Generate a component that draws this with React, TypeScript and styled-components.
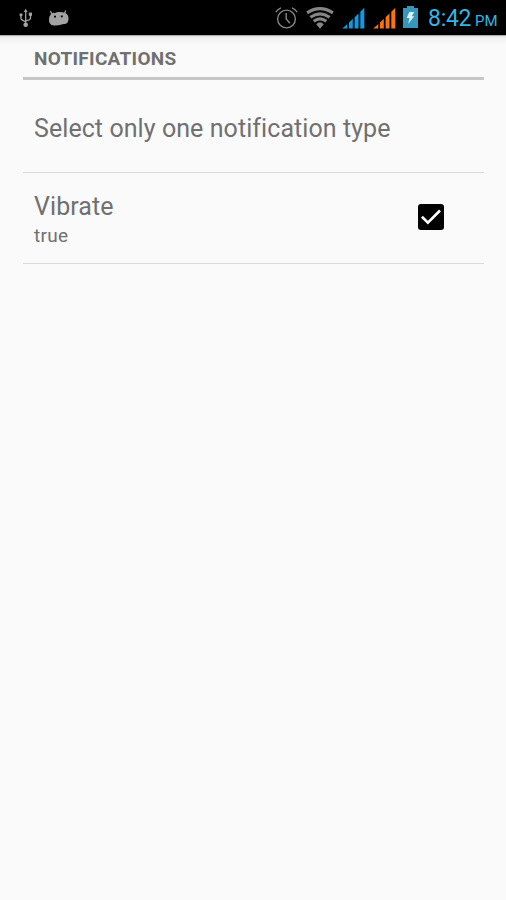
import React from "react";
import styled, { createGlobalStyle } from "styled-components";

const GlobalStyle = createGlobalStyle`
  *, *::before, *::after { box-sizing: border-box; }
  html, body { margin: 0; background: #fafafa; }
  body { font-family: Roboto, "Noto Sans", sans-serif; overflow: hidden; }
`;

const Screen = styled.div`
  display: flex;
  flex-direction: column;
  width: 100%;
  height: 100vh;
  background: #fafafa;
  color: #707070;
`;

const StatusBar = styled.header`
  display: flex;
  justify-content: space-between;
  flex: none;
  height: 35px;
  padding: 0 9px 0 18px;
  background: #000;
`;

const StatusGroup = styled.div<{ $gap: number }>`
  display: flex;
  align-items: center;
  gap: ${(p) => p.$gap}px;
`;

const Icon = styled.svg`
  display: block;
  flex: none;
`;

const BatterySlot = styled.span`
  margin: -1px 1px 0 -1px;
`;

const Clock = styled.time`
  display: flex;
  align-items: baseline;
  gap: 4px;
  margin-left: 1px;
  padding-top: 4px;
  color: #33b5e5;
  font-size: 23px;
  line-height: 33px;
`;

const ClockDigits = styled.span`
  width: 43px;
  white-space: nowrap;
  letter-spacing: -0.3px;
`;

const Meridiem = styled.span`
  width: 22px;
  font-size: 15px;
  white-space: nowrap;
`;

const Content = styled.main`
  flex: 1;
  padding: 0 22.5px;
  background: linear-gradient(#ababab 0 1px, #e6e6e6 1px, #f3f3f3 4px, #fafafa 10px);
`;

const CategoryTitle = styled.h2`
  height: 45px;
  margin: 0;
  padding: 12px 11.5px 0;
  border-bottom: 3px solid #c6c6c6;
  font-size: 19px;
  font-weight: 700;
  line-height: 24px;
  letter-spacing: 0.28px;
`;

const Preference = styled.section<{ $height: number }>`
  display: flex;
  align-items: center;
  justify-content: space-between;
  height: ${(p) => p.$height}px;
  padding: 0 39.5px 0 11.5px;
  border-bottom: 1px solid #d9d9d9;
`;

const Labels = styled.div`
  display: flex;
  flex-direction: column;
`;

const Title = styled.span`
  padding-top: 5px;
  font-size: 25px;
  line-height: 32px;
  letter-spacing: 0.07px;
  white-space: nowrap;
`;

const Summary = styled.span`
  margin-top: -1px;
  font-size: 19px;
  line-height: 28px;
  letter-spacing: 0.3px;
`;

const CheckBox = styled.button`
  display: block;
  width: 26px;
  height: 26px;
  margin-top: -2px;
  padding: 0;
  border: 0;
  border-radius: 3px;
  background: #000;
`;

const UsbIcon = () => (
  <Icon width="16" height="20" viewBox="0 0 16 20" fill="none" stroke="#a3a3a3" strokeWidth="1.3">
    <path d="M7.7 3v13M3 7v3.2q0 1.5 1.5 2L7.7 14M12.5 6v4q0 1.2-1.5 1.8L7.7 13" />
    <path d="M5.7 4 7.7.8 9.7 4Z" fill="#a3a3a3" stroke="none" />
    <circle cx="3" cy="6.8" r="1.6" fill="#a3a3a3" stroke="none" />
    <path d="M10.8 4.6h3.2v3.2h-3.2Z" fill="#a3a3a3" stroke="none" />
    <circle cx="7.7" cy="16.7" r="2.3" fill="#a3a3a3" stroke="none" />
  </Icon>
);

const AndroidIcon = () => (
  <Icon width="21" height="18" viewBox="0 0 21 18">
    <path d="M3.9 5.2 2.4 2M16.4 4.4 17.8 1.4" stroke="#a3a3a3" strokeWidth="1.3" />
    <path d="M3 5Q5 3.4 7 4Q9 2.9 11.5 3Q14.5 2.9 17 4Q20.5 5.4 20.5 9.4Q20.5 14.6 16.8 15Q14.8 14.8 12.8 15.8Q10 16.8 5.5 16.4Q1 15.8 1 11.2Q1 7 3 5Z" fill="#a3a3a3" />
    <path d="M6 7.7h2M12.8 7.3h2" stroke="#000" strokeWidth="1.7" />
  </Icon>
);

const AlarmIcon = () => (
  <Icon width="23" height="24" viewBox="0 0 23 24" fill="none" stroke="#858585" strokeWidth="1.4">
    <circle cx="11.5" cy="13" r="8.9" />
    <path d="M11.2 7v6l3.7 4.3M.8 6.3Q2.4 3.2 6 1.8M17 1.8q3.6 1.4 5.2 4.5" />
  </Icon>
);

const WifiIcon = () => (
  <Icon width="28" height="22" viewBox="0 0 28 22" fill="none" stroke="#858585" strokeWidth="3.2">
    <path d="M1.1 5.8Q14-2.5 26.9 5.8" />
    <path d="M4.4 10.2Q14 3.5 23.6 10.2" />
    <path d="M7.7 14.3Q14 9.6 20.3 14.3" />
    <path d="M10.2 17.3Q14 13.4 17.8 17.3L14 21.7Z" fill="#858585" stroke="none" />
  </Icon>
);

const SignalIcon = ({ color }: { color: string }) => (
  <Icon width="23" height="22" viewBox="0 0 23 22" fill={color}>
    <path d="M.3 21.5 5.3 17v4.5ZM7 15.4l3.8-3.6v9.7H7ZM12.6 10.2l3.9-3.7v15h-3.9ZM18.3 4.7 22.3.8v20.7h-4Z" />
  </Icon>
);

const BatteryIcon = () => (
  <Icon width="15" height="22" viewBox="0 0 15 22">
    <path d="M0 2h4V0h7v2h4v20H0Z" fill="#3796bb" />
    <path d="M6.3 6h5L8.7 10.2h2.5L5.1 18 6.6 12.1H3.7Z" fill="#e1f2f7" />
  </Icon>
);

export default function App() {
  return (
    <>
      <GlobalStyle />
      <Screen>
        <StatusBar>
          <StatusGroup $gap={14}>
            <UsbIcon />
            <AndroidIcon />
          </StatusGroup>
          <StatusGroup $gap={8}>
            <AlarmIcon />
            <WifiIcon />
            <SignalIcon color="#0d9be4" />
            <SignalIcon color="#fb730d" />
            <BatterySlot>
              <BatteryIcon />
            </BatterySlot>
            <Clock>
              <ClockDigits>8:42</ClockDigits>
              <Meridiem>PM</Meridiem>
            </Clock>
          </StatusGroup>
        </StatusBar>
        <Content>
          <CategoryTitle>NOTIFICATIONS</CategoryTitle>
          <Preference $height={93}>
            <Title>Select only one notification type</Title>
          </Preference>
          <Preference $height={91}>
            <Labels>
              <Title>Vibrate</Title>
              <Summary>true</Summary>
            </Labels>
            <CheckBox role="checkbox" aria-checked="true" aria-label="Vibrate">
              <Icon width="26" height="26" viewBox="0 0 26 26" fill="none" stroke="#fff" strokeWidth="2.6">
                <path d="m3.9 12.8 6 5.8L22 6.5" />
              </Icon>
            </CheckBox>
          </Preference>
        </Content>
      </Screen>
    </>
  );
}
